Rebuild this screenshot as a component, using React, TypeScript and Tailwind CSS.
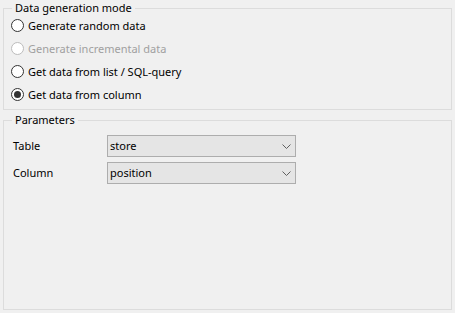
import React from 'react';

const font = { fontFamily: '"Segoe UI", "Noto Sans", sans-serif' };

function Radio({ label, checked, disabled }: { label: string; checked?: boolean; disabled?: boolean }) {
  return (
    <label className="flex h-[23px] items-center">
      <span
        className={`flex h-[13px] w-[13px] items-center justify-center rounded-full border bg-white ${
          disabled ? 'border-[#bcbcbc] bg-[#f0f0f0]' : 'border-[#333333]'
        }`}
      >
        {checked && <span className="h-[7px] w-[7px] rounded-full bg-[#333333]" />}
      </span>
      <span className={`ml-[4px] ${disabled ? 'text-[#a0a0a0]' : 'text-black'}`}>{label}</span>
    </label>
  );
}

function Combo({ value }: { value: string }) {
  return (
    <div className="flex h-[22px] w-[189px] items-center justify-between border border-[#adadad] bg-[#e5e5e5] pl-[2px] pr-[4px]">
      <span className="text-black">{value}</span>
      <svg width="9" height="5" viewBox="0 0 9 5">
        <path d="M0.5 0.5 L4.5 4.5 L8.5 0.5" fill="none" stroke="#606060" strokeWidth="1" />
      </svg>
    </div>
  );
}

export default function App() {
  return (
    <div className="h-[313px] w-[455px] bg-[#f0f0f0] pl-[3px] text-[11px] leading-4" style={font}>
      {/* Data generation mode */}
      <fieldset className="h-[110px] w-[449px] border border-[#dcdcdc]">
        <legend className="ml-[8px] px-[3px] leading-4">Data generation mode</legend>
        <div className="-mt-0.5 flex flex-col pl-[7px]">
          <Radio label="Generate random data" />
          <Radio label="Generate incremental data" disabled />
          <Radio label="Get data from list / SQL-query" />
          <Radio label="Get data from column" checked />
        </div>
      </fieldset>

      {/* Parameters */}
      <fieldset className="mt-[2px] h-[198px] w-[449px] border border-[#dcdcdc]">
        <legend className="ml-[8px] px-[3px] leading-4">Parameters</legend>
        <div className="flex flex-col gap-[5px] pl-[9px] pt-[7px]">
          <div className="flex items-center">
            <span className="w-[94px]">Table</span>
            <Combo value="store" />
          </div>
          <div className="flex items-center">
            <span className="w-[94px]">Column</span>
            <Combo value="position" />
          </div>
        </div>
      </fieldset>
    </div>
  );
}
